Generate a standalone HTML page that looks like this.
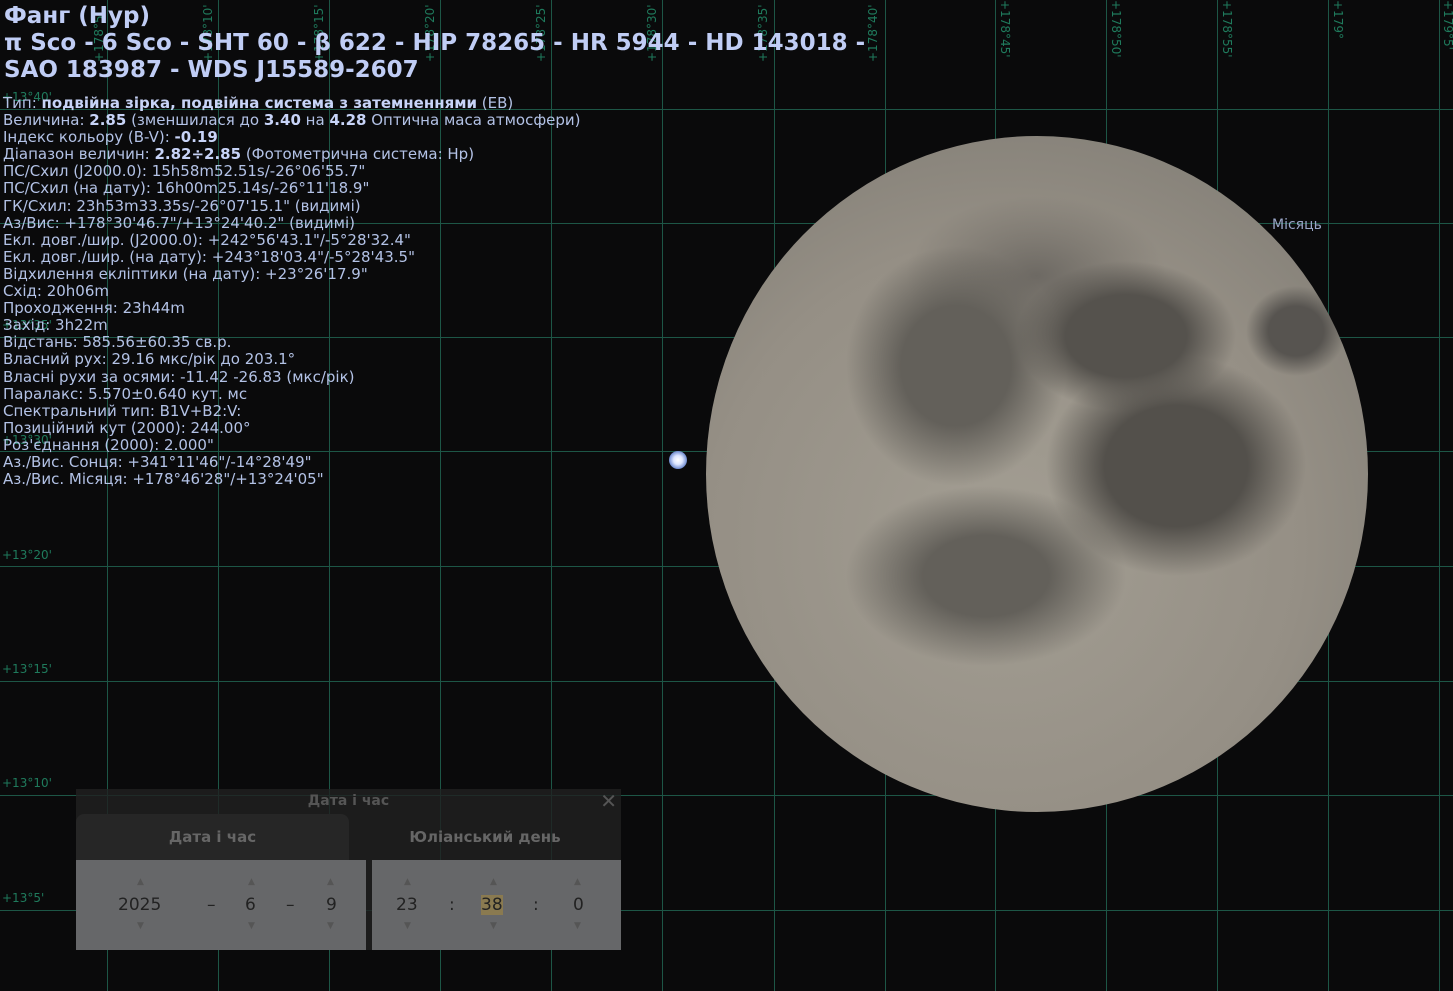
<!DOCTYPE html>
<html><head><meta charset="utf-8"><style>
html,body{margin:0;padding:0;}
body{width:1453px;height:991px;background:#0a0a0b;position:relative;overflow:hidden;font-family:"DejaVu Sans","Liberation Sans",sans-serif;}
.vl{position:absolute;top:0;height:991px;width:1px;background:#1d5646;}
.hl{position:absolute;left:0;width:1453px;height:1px;background:#1d5646;}
.lab{position:absolute;color:#1f7a5c;font-size:12px;}
.vlab{position:absolute;color:#1f7a5c;font-size:12px;transform:rotate(-90deg);transform-origin:left top;white-space:nowrap;}
.title{position:absolute;left:4px;top:3px;color:#c0cdf5;font-weight:bold;font-size:23px;line-height:27px;white-space:nowrap;}
.info{position:absolute;left:3px;top:95px;color:#b3c2e6;font-size:15px;line-height:17.1px;white-space:nowrap;}
.info b{color:#c8d4f8;}
.moon{position:absolute;left:706px;top:136px;width:662px;height:676px;border-radius:50%;
background:
radial-gradient(ellipse 110px 75px at 420px 200px,#55524d 0%,#55524d 55%,rgba(85,82,77,0) 100%),
radial-gradient(ellipse 130px 110px at 470px 330px,#53504b 0%,#53504b 55%,rgba(83,80,75,0) 100%),
radial-gradient(ellipse 50px 45px at 590px 195px,#575450 0%,#575450 55%,rgba(87,84,80,0) 100%),
radial-gradient(ellipse 110px 120px at 250px 230px,#63605a 0%,#63605a 50%,rgba(99,96,90,0) 100%),
radial-gradient(ellipse 140px 90px at 280px 440px,#63605a 0%,#63605a 45%,rgba(99,96,90,0) 100%),
radial-gradient(ellipse 130px 80px at 330px 140px,#6d6963 0%,rgba(109,105,99,0) 100%),
radial-gradient(circle at 45% 60%,#a39e93 0%,#958f85 55%,#827e76 85%,#625f5a 100%);}
.dlg{position:absolute;left:76px;top:789px;width:545px;height:161px;background:rgba(32,32,33,0.8);}
.dlg .t{position:absolute;left:0;width:545px;top:4px;text-align:center;color:#555;font-weight:bold;font-size:14px;}
.dlg .x{position:absolute;right:4px;top:0px;color:#555;font-size:20px;font-weight:bold;}
.tab1{position:absolute;left:0;top:25px;width:273px;height:46px;background:#262626;border-radius:8px 8px 0 0;color:#666;font-weight:bold;font-size:15px;text-align:center;line-height:46px;}
.tab2{position:absolute;left:273px;top:25px;width:272px;height:46px;color:#666;font-weight:bold;font-size:15px;text-align:center;line-height:46px;}
.box{position:absolute;top:71px;height:90px;background:#666769;}
.n{position:absolute;top:106px;color:#222;font-size:17px;}
.ar{position:absolute;color:#555;font-size:9px;}
</style></head><body>
<div class="vl" style="left:107px"></div><div class="vl" style="left:218px"></div><div class="vl" style="left:329px"></div><div class="vl" style="left:440px"></div><div class="vl" style="left:551px"></div><div class="vl" style="left:662px"></div><div class="vl" style="left:774px"></div><div class="vl" style="left:885px"></div><div class="vl" style="left:995px"></div><div class="vl" style="left:1106px"></div><div class="vl" style="left:1217px"></div><div class="vl" style="left:1328px"></div><div class="vl" style="left:1439px"></div>
<div class="hl" style="top:109px"></div><div class="hl" style="top:223px"></div><div class="hl" style="top:337px"></div><div class="hl" style="top:451px"></div><div class="hl" style="top:566px"></div><div class="hl" style="top:681px"></div><div class="hl" style="top:795px"></div><div class="hl" style="top:910px"></div>
<div class="vlab" style="left:92px;top:62px">+178°5'</div>
<div class="vlab" style="left:201px;top:62px">+178°10'</div>
<div class="vlab" style="left:312px;top:62px">+178°15'</div>
<div class="vlab" style="left:423px;top:62px">+178°20'</div>
<div class="vlab" style="left:534px;top:62px">+178°25'</div>
<div class="vlab" style="left:645px;top:62px">+178°30'</div>
<div class="vlab" style="left:756px;top:62px">+178°35'</div>
<div class="vlab" style="left:866px;top:62px">+178°40'</div>
<div class="vlab" style="transform:rotate(90deg);transform-origin:left top;left:1012px;top:0">+178°45'</div>
<div class="vlab" style="transform:rotate(90deg);transform-origin:left top;left:1123px;top:0">+178°50'</div>
<div class="vlab" style="transform:rotate(90deg);transform-origin:left top;left:1234px;top:0">+178°55'</div>
<div class="vlab" style="transform:rotate(90deg);transform-origin:left top;left:1345px;top:0">+179°</div>
<div class="vlab" style="transform:rotate(90deg);transform-origin:left top;left:1455px;top:0">+179°5'</div>
<div class="lab" style="left:2px;top:90px">+13°40'</div>
<div class="lab" style="left:2px;top:318px">+13°35'</div>
<div class="lab" style="left:2px;top:433px">+13°30'</div>
<div class="lab" style="left:2px;top:548px">+13°20'</div>
<div class="lab" style="left:2px;top:662px">+13°15'</div>
<div class="lab" style="left:2px;top:776px">+13°10'</div>
<div class="lab" style="left:2px;top:891px">+13°5'</div>
<div class="moon"></div>
<div style="position:absolute;left:1272px;top:217px;color:#9aa6c8;font-size:14px">Місяць</div>
<div style="position:absolute;left:669px;top:451px;width:18px;height:18px;border-radius:50%;background:radial-gradient(circle,#fff 0%,#dde6ff 35%,#6f8bd0 70%,transparent 100%)"></div>
<div class="title">Фанг (Нур)<br>π Sco - 6 Sco - SHT 60 - β 622 - HIP 78265 - HR 5944 - HD 143018 -<br>SAO 183987 - WDS J15589-2607</div>
<div class="info">Тип: <b>подвійна зірка, подвійна система з затемненнями</b> (EB)<br>Величина: <b>2.85</b> (зменшилася до <b>3.40</b> на <b>4.28</b> Оптична маса атмосфери)<br>Індекс кольору (B-V): <b>-0.19</b><br>Діапазон величин: <b>2.82÷2.85</b> (Фотометрична система: Hp)<br>ПС/Схил (J2000.0): 15h58m52.51s/-26°06'55.7"<br>ПС/Схил (на дату): 16h00m25.14s/-26°11'18.9"<br>ГК/Схил: 23h53m33.35s/-26°07'15.1" (видимі)<br>Аз/Вис: +178°30'46.7"/+13°24'40.2" (видимі)<br>Екл. довг./шир. (J2000.0): +242°56'43.1"/-5°28'32.4"<br>Екл. довг./шир. (на дату): +243°18'03.4"/-5°28'43.5"<br>Відхилення екліптики (на дату): +23°26'17.9"<br>Схід: 20h06m<br>Проходження: 23h44m<br>Захід: 3h22m<br>Відстань: 585.56±60.35 св.р.<br>Власний рух: 29.16 мкс/рік до 203.1°<br>Власні рухи за осями: -11.42 -26.83 (мкс/рік)<br>Паралакс: 5.570±0.640 кут. мс<br>Спектральний тип: B1V+B2:V:<br>Позиційний кут (2000): 244.00°<br>Роз'єднання (2000): 2.000"<br>Аз./Вис. Сонця: +341°11'46"/-14°28'49"<br>Аз./Вис. Місяця: +178°46'28"/+13°24'05"</div>
<div class="dlg">
<div class="t">Дата і час</div><div class="x">✕</div>
<div class="tab1">Дата і час</div><div class="tab2">Юліанський день</div>
<div class="box" style="left:0;width:290px"></div>
<div class="box" style="left:296px;width:249px"></div>
<div class="n" style="left:42px">2025</div><div class="n" style="left:131px">–</div><div class="n" style="left:169px">6</div><div class="n" style="left:210px">–</div><div class="n" style="left:250px">9</div>
<div class="n" style="left:320px">23</div><div class="n" style="left:373px">:</div><div class="n" style="left:405px;background:#8a7a50">38</div><div class="n" style="left:457px">:</div><div class="n" style="left:497px">0</div>
<div class="ar" style="left:61px;top:88px">▲</div><div class="ar" style="left:61px;top:132px">▼</div>
<div class="ar" style="left:172px;top:88px">▲</div><div class="ar" style="left:172px;top:132px">▼</div>
<div class="ar" style="left:251px;top:88px">▲</div><div class="ar" style="left:251px;top:132px">▼</div>
<div class="ar" style="left:328px;top:88px">▲</div><div class="ar" style="left:328px;top:132px">▼</div>
<div class="ar" style="left:414px;top:88px">▲</div><div class="ar" style="left:414px;top:132px">▼</div>
<div class="ar" style="left:498px;top:88px">▲</div><div class="ar" style="left:498px;top:132px">▼</div>
</div>
</body></html>
